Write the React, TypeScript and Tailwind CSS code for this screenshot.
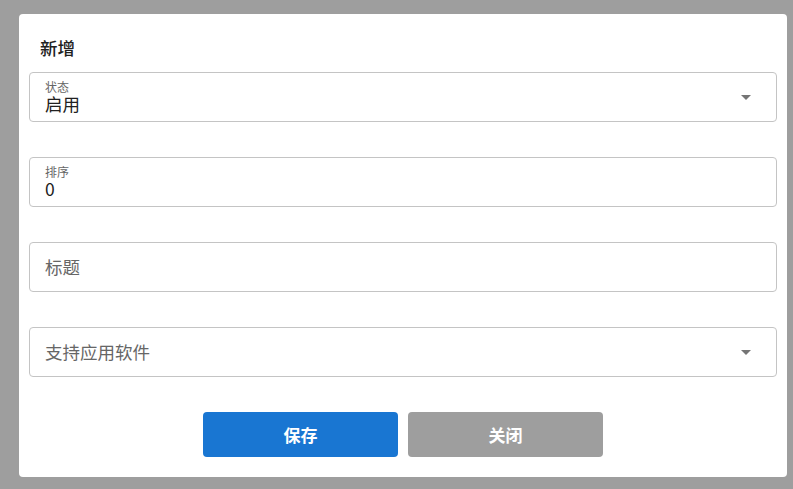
const font = { fontFamily: '"Noto Sans CJK SC", "Noto Sans", sans-serif' };

function Caret() {
  return (
    <svg width="24" height="24" viewBox="0 0 24 24" className="fill-[#757575]">
      <path d="M7 10l5 5 5-5z" />
    </svg>
  );
}

function Field({ label, value, select }: { label: string; value?: string; select?: boolean }) {
  return (
    <div className="h-[50px] rounded-[4px] border border-[#c4c4c4] flex items-center pl-[15px] pr-[18px]">
      <div className="flex-1 self-stretch">
        {value !== undefined ? (
          <div className="pt-[7px]">
            <div className="h-[13px] text-[12px] leading-[13px] text-[#666666]">{label}</div>
            <div className="mt-[2px] h-[18px] text-[17.5px] leading-[18px] text-[#212121]">{value}</div>
          </div>
        ) : (
          <div className="h-full flex items-center text-[17.5px] leading-[20px] text-[#666666]">{label}</div>
        )}
      </div>
      {select && <Caret />}
    </div>
  );
}

export default function App() {
  return (
    <div className="h-[489px] bg-[#9e9e9e] pt-[14px] pl-[19px]" style={font}>
      <div className="w-[768px] h-[463px] bg-white rounded-[4px] px-[10px]">
        <div className="pt-[24px] pl-[11px] h-[58px] text-[17.5px] leading-[20px] font-medium text-[#212121]">
          新增
        </div>
        <div className="flex flex-col gap-[35px]">
          <Field label="状态" value="启用" select />
          <Field label="排序" value="0" />
          <Field label="标题" />
          <Field label="支持应用软件" select />
        </div>
        <div className="mt-[35px] flex justify-center gap-[10px]">
          <button className="w-[195px] h-[45px] rounded-[4px] bg-[#1976d2] text-white text-[17px] font-bold">
            保存
          </button>
          <button className="w-[195px] h-[45px] rounded-[4px] bg-[#9e9e9e] text-white text-[17px] font-bold">
            关闭
          </button>
        </div>
      </div>
    </div>
  );
}
